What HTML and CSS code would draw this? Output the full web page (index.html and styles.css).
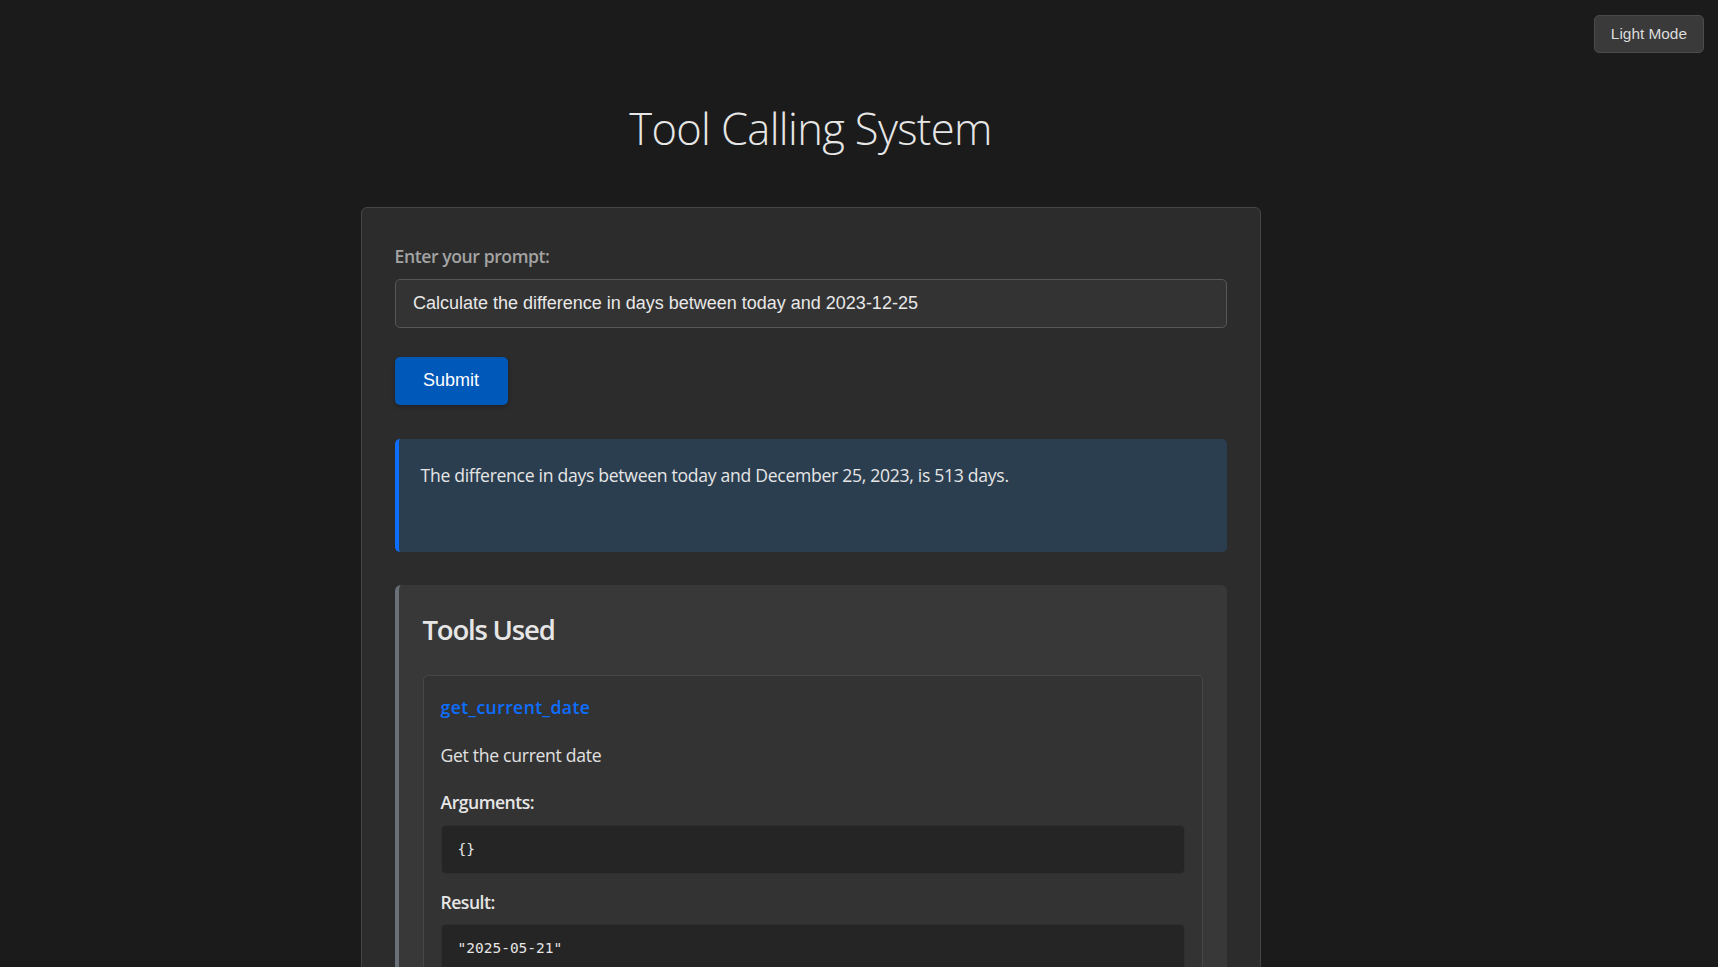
FILE: index.html
```html
<!DOCTYPE html>
<html lang="en">
<head>
<meta charset="utf-8">
<title>Tool Calling System</title>
<link rel="stylesheet" href="styles.css">
</head>
<body>
<button class="theme-toggle" type="button">Light Mode</button>
<div class="page">
  <h1 class="title">Tool Calling System</h1>
  <div class="container">
    <label class="prompt-label" for="prompt">Enter your prompt:</label>
    <input id="prompt" class="prompt-input" type="text" value="Calculate the difference in days between today and 2023-12-25">
    <button class="submit-btn" type="button">Submit</button>
    <div class="response">
      <p>The difference in days between today and December 25, 2023, is 513 days.</p>
    </div>
    <div class="tools">
      <h2 class="tools-title">Tools Used</h2>
      <div class="tool">
        <h3 class="tool-name">get_current_date</h3>
        <p class="tool-desc">Get the current date</p>
        <div class="field-label">Arguments:</div>
        <pre class="code">{}</pre>
        <div class="field-label field-label-2">Result:</div>
        <pre class="code">"2025-05-21"</pre>
      </div>
    </div>
  </div>
</div>
</body>
</html>
```

FILE: styles.css
```css
* { box-sizing: border-box; }

html, body {
  margin: 0;
  padding: 0;
}

body {
  background: #1b1b1b;
  color: #e2e2e2;
  font-family: "Open Sans", "Noto Sans", sans-serif;
  font-size: 17.6px;
  letter-spacing: -0.3px;
}

.theme-toggle {
  position: fixed;
  top: 15px;
  right: 14px;
  height: 38px;
  padding: 0 16px;
  background: #3a3a3a;
  border: 1px solid #4b4b4b;
  border-radius: 5px;
  color: #dcdcdc;
  font-family: "Liberation Sans", Arial, sans-serif;
  font-size: 15.4px;
  letter-spacing: 0;
}

.page {
  width: 1621px;
  padding-top: 99px;
  padding-bottom: 40px;
}

.title {
  margin: 0;
  text-align: center;
  font-weight: 300;
  font-size: 43.5px;
  letter-spacing: -0.65px;
  line-height: 60px;
  color: #e6e6e6;
}

.container {
  width: 900px;
  margin: 48px auto 0;
  background: #2c2c2c;
  border: 1px solid #454545;
  border-radius: 6px;
  padding: 36px 33px 33px 33px;
}

.prompt-label {
  display: block;
  font-weight: 600;
  letter-spacing: -0.42px;
  line-height: 24px;
  color: #a3a3a3;
  margin-bottom: 11px;
}

.prompt-input {
  display: block;
  width: 100%;
  height: 49px;
  padding: 0 17px 0 17.4px;
  background: #333333;
  border: 1px solid #575757;
  border-radius: 5px;
  color: #e8e8e8;
  font-family: "Liberation Sans", Arial, sans-serif;
  font-size: 18px;
  letter-spacing: 0;
  outline: none;
}

.submit-btn {
  display: block;
  margin-top: 28.7px;
  height: 48px;
  padding: 0 28.6px;
  background: #0058b8;
  border: none;
  border-radius: 5px;
  color: #ffffff;
  font-family: "Liberation Sans", Arial, sans-serif;
  font-size: 18px;
  letter-spacing: 0;
  box-shadow: 0 2px 4px rgba(0, 0, 0, 0.25);
}

.response {
  margin-top: 34px;
  height: 113px;
  background: #2b3e50;
  border-left: 4px solid #0d6efd;
  border-radius: 5px;
  padding: 24px 22px;
}

.response p {
  margin: 0;
  line-height: 24px;
  color: #e6e6e6;
}

.tools {
  margin-top: 33.3px;
  background: #383838;
  border-left: 4px solid #69707a;
  border-radius: 6px;
  padding: 26px 24px 24px 24px;
}

.tools-title {
  margin: 0 0 26px;
  font-size: 27.5px;
  font-weight: 600;
  letter-spacing: -1.2px;
  line-height: 38px;
  color: #e6e6e6;
}

.tool {
  background: #333333;
  border: 1px solid #474747;
  border-radius: 5px;
  padding: 17px;
}

.tool-name {
  margin: 2px 0 0;
  font-size: 17.6px;
  font-weight: 600;
  letter-spacing: 0.4px;
  line-height: 24px;
  color: #0d6efd;
}

.tool-desc {
  margin: 24.3px 0 0;
  line-height: 24px;
  color: #e2e2e2;
}

.field-label {
  margin-top: 23px;
  font-weight: 600;
  letter-spacing: -0.5px;
  line-height: 24px;
  color: #e6e6e6;
}

.field-label-2 {
  margin-top: 16px;
}

.code {
  margin: 10.5px 0 0;
  height: 49px;
  padding: 14.8px 16px 16px;
  background: #252525;
  border: 1px solid #2f2f2f;
  border-radius: 5px;
  font-family: "DejaVu Sans Mono", "Liberation Mono", monospace;
  font-size: 14.5px;
  letter-spacing: 0;
  line-height: 17px;
  color: #e6e6e6;
}
```
